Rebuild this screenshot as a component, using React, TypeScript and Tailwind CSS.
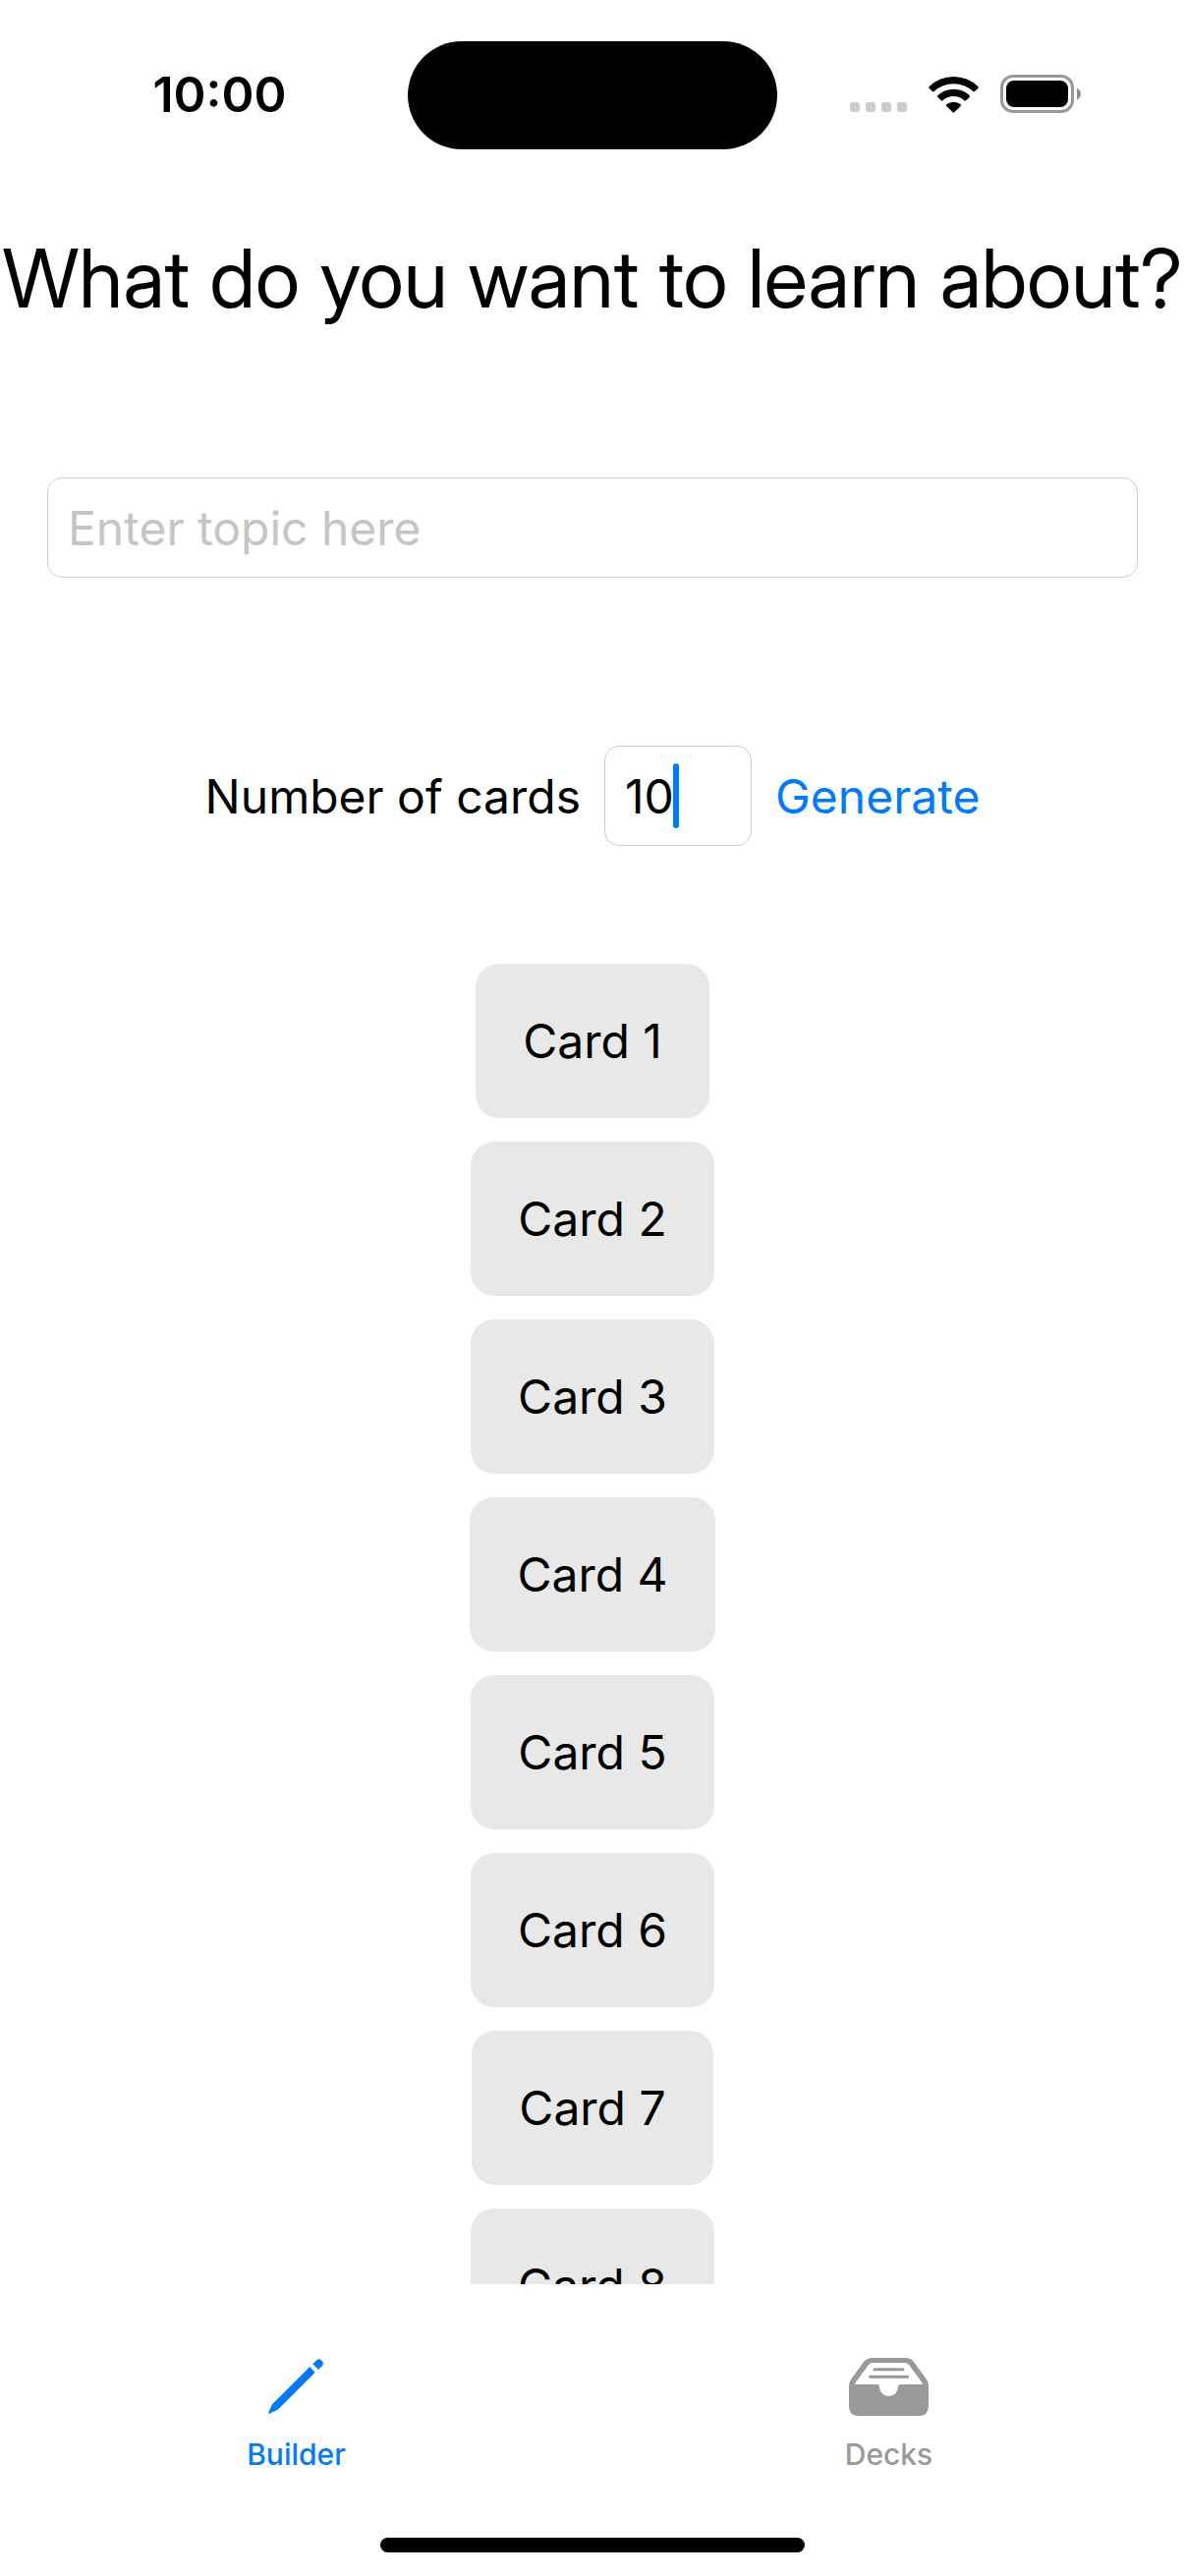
import { useState } from "react";

const cards = Array.from({ length: 10 }, (_, i) => `Card ${i + 1}`);

function WifiIcon() {
  return (
    <svg viewBox="0 0 51 38" className="h-[38px] w-[51px]" fill="currentColor" aria-hidden="true">
      <path d="M.8 11A35.5 35.5 0 0 1 50.2 11Q51.2 12 50.3 12.9L47 16.1Q46.2 16.9 45.3 16A29.5 29.5 0 0 0 5.7 16Q4.8 16.9 4 16.1L.7 12.9Q-.2 12 .8 11Z" />
      <path d="M9.4 20.1A23.5 23.5 0 0 1 41.6 20.1Q42.5 21 41.6 21.9L38.1 25.2Q37.3 26 36.4 25.2A16.5 16.5 0 0 0 14.6 25.2Q13.7 26 12.9 25.2L9.4 21.9Q8.5 21 9.4 20.1Z" />
      <path d="M18.3 29.2A11.5 11.5 0 0 1 32.7 29.2Q33.5 30 32.7 30.9L26.3 37.2Q25.5 38 24.7 37.2L18.3 30.9Q17.5 30 18.3 29.2Z" />
    </svg>
  );
}

function BatteryIcon() {
  return (
    <svg viewBox="0 0 82 39" className="h-[39px] w-[82px]" aria-hidden="true">
      <rect x="1.5" y="1.5" width="72" height="36" rx="11.5" fill="none" stroke="#999" strokeWidth="3" />
      <rect x="6" y="6" width="63" height="27" rx="8" fill="#000" />
      <path d="M78 13.5Q82 15.5 82 19.5Q82 23.5 78 25.5Z" fill="#8e8e8e" />
    </svg>
  );
}

function PencilIcon() {
  return (
    <svg viewBox="0 0 57 56" className="h-14 w-[57px]" fill="currentColor" aria-hidden="true">
      <path d="M42.3 8L47.7 13.7L10.7 50.8Q9.5 52 8 52.6L1.5 55.5Q-.5 56.2 .4 54.3L3.2 48Q3.8 46.5 5 45.3Z" />
      <path d="M45.3 5.2L48.8 1.7Q51.5-1 54.3 1.7Q57.3 4.7 54.6 7.4L51 11Z" />
    </svg>
  );
}

function TrayIcon() {
  return (
    <svg viewBox="0 0 81 59" className="h-[59px] w-[81px]" fill="currentColor" aria-hidden="true">
      <path
        fillRule="evenodd"
        d="M0 29Q0 25 2 22L15 4Q18 0 24 0H57Q63 0 66 4L79 22Q81 25 81 29V49Q81 59 71 59H10Q0 59 0 49ZM6 26L20 7Q21.500 5 24 5H57Q59.500 5 61 7L75 26Q75 27 74 27H52Q50 27 50 29.500A9.500 9.500 0 0 1 31 29.500Q31 27 29 27H7Q6 27 6 26Z"
      />
      <path d="M26 11.700H55M21.500 19.300H59.500" stroke="currentColor" strokeWidth="3" strokeLinecap="round" />
    </svg>
  );
}

function StatusBar() {
  return (
    <header className="grid grid-cols-[1fr_376px_1fr] items-center pt-[42px]">
      <time className="pb-[3px] pl-8 text-center text-[50px] leading-[60px] font-semibold">10:00</time>
      <div className="h-[110px] rounded-full bg-black" />
      <div className="flex items-end justify-end pr-[106px] pb-[3px]">
        <div className="mr-[22px] flex gap-1.5 pb-px">
          <i className="size-2.5 rounded-[3px] bg-[#ccc]" />
          <i className="size-2.5 rounded-[3px] bg-[#ccc]" />
          <i className="size-2.5 rounded-[3px] bg-[#ccc]" />
          <i className="size-2.5 rounded-[3px] bg-[#ccc]" />
        </div>
        <div className="mr-[22px]">
          <WifiIcon />
        </div>
        <BatteryIcon />
      </div>
    </header>
  );
}

export default function App() {
  const [topic, setTopic] = useState("");
  const [count, setCount] = useState("10");

  return (
    <div className="flex h-screen flex-col bg-white font-['Inter',sans-serif] text-[48px] leading-[61px] text-black">
      <StatusBar />

      <main className="flex min-h-0 flex-1 flex-col">
        <h1 className="mt-[82px] text-center font-['Inter_Display','Inter',sans-serif] text-[82px] leading-[100px] whitespace-nowrap">
          What do you want to learn about?
        </h1>

        <div className="mt-[152px] px-12">
          <input
            type="text"
            aria-label="Topic"
            placeholder="Enter topic here"
            value={topic}
            onChange={(e) => setTopic(e.target.value)}
            className="block h-[102px] w-full rounded-[15px] border border-[#cbcbcb] px-5 outline-none placeholder:text-[#c5c5c7]"
          />
        </div>

        <div className="mt-[171px] flex items-center justify-center gap-6">
          <label htmlFor="count">Number of cards</label>
          <div className="relative">
            <input
              id="count"
              type="text"
              inputMode="numeric"
              value={count}
              onChange={(e) => setCount(e.target.value)}
              className="block h-[102px] w-[150px] rounded-[15px] border border-[#cbcbcb] px-5 outline-none"
            />
            <span className="absolute top-[18px] left-[70px] h-[66px] w-1.5 rounded-full bg-[#007aff]" />
          </div>
          <button type="button" className="text-[#007aff]">
            Generate
          </button>
        </div>

        <ul className="mt-[120px] flex min-h-0 flex-1 flex-col items-center gap-6 overflow-y-auto [scrollbar-width:none]">
          {cards.map((card) => (
            <li key={card} className="shrink-0 rounded-3xl bg-[#e8e8e8] p-12">
              {card}
            </li>
          ))}
        </ul>
      </main>

      <nav className="grid grid-cols-2 pt-[74px] text-[30px] leading-9 font-medium">
        <button type="button" className="flex flex-col items-center gap-[21px] text-[#007aff]">
          <span className="flex h-[60px] items-center">
            <PencilIcon />
          </span>
          Builder
        </button>
        <button type="button" className="flex flex-col items-center gap-[21px] text-[#999]">
          <span className="flex h-[60px] items-center">
            <TrayIcon />
          </span>
          Decks
        </button>
      </nav>
      <div className="mx-auto mt-[67px] mb-6 h-[15px] w-[432px] shrink-0 rounded-full bg-black" />
    </div>
  );
}
